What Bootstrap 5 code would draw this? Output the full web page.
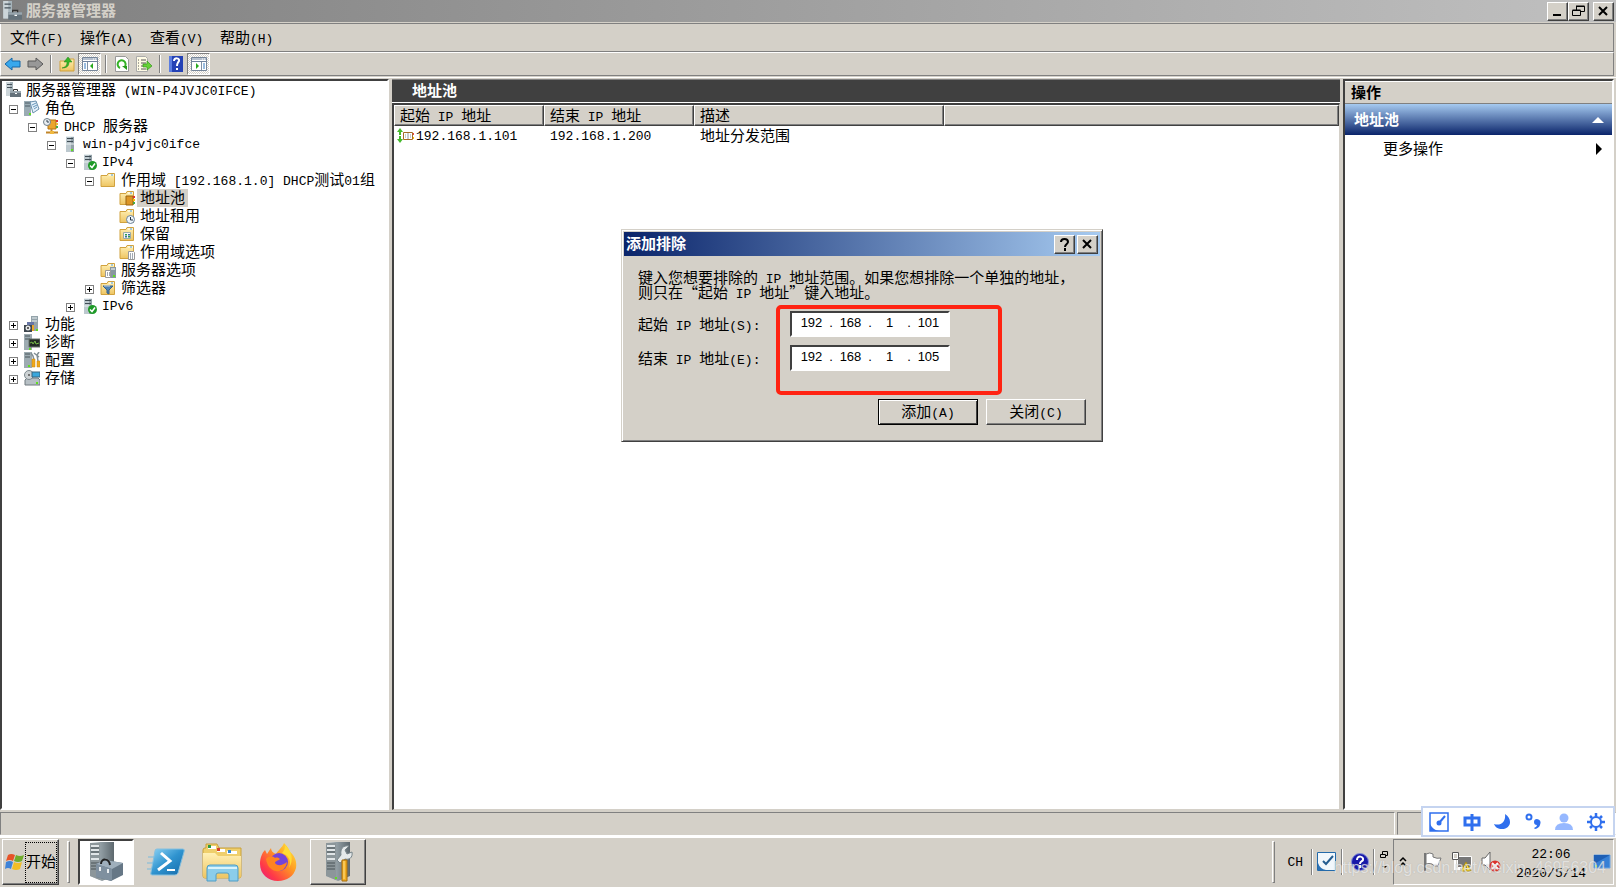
<!DOCTYPE html>
<html lang="zh-CN">
<head>
<meta charset="utf-8">
<meta name="viewport" content="width=device-width, initial-scale=1">
<title>服务器管理器</title>
<link href="https://cdn.jsdelivr.net/npm/bootstrap@5.3.0/dist/css/bootstrap.min.css" rel="stylesheet">
<script src="https://cdn.jsdelivr.net/npm/bootstrap@5.3.0/dist/js/bootstrap.bundle.min.js"></script>
<style>
:root { --face:#d4d0c8; --shade:#808080; --deep:#404040; }
body { font-family:"Liberation Sans","Noto Sans CJK SC",sans-serif; font-size:15px; line-height:18px; color:#000; background:var(--face); }
.lat { font-family:"Liberation Mono","Noto Sans CJK SC",monospace; font-size:13px; line-height:13px; white-space:pre; }
button, input { font:inherit; color:inherit; }
svg { display:block; flex:none; }
.face { background:var(--face); }
.raised { background:var(--face); border:1px solid; border-color:#fff var(--deep) var(--deep) #fff; box-shadow:inset -1px -1px 0 var(--shade); border-radius:0; padding:0; }
.sunken { border:2px solid; border-color:var(--deep) #fff #fff var(--deep); background:#fff; }
.caption-bar { height:22px; padding-left:2px; padding-right:2px; background:linear-gradient(90deg,#808080,#c0c0c0); color:var(--face); font-weight:700; }
.caption-bar .raised { width:21px; height:19px; color:#000; }
.strip { border:1px solid; border-color:#fff var(--shade) var(--shade) #fff; margin-right:2px; }
.menu-strip { height:28px; padding-left:1px; border-top:0; box-shadow:0 -1px 0 var(--shade); margin-top:2px; }
.menu-strip a { color:#000; text-decoration:none; padding:0 8px; width:70px; white-space:nowrap; }
.tool-strip { height:24px; padding-left:1px; }
.tool { width:22px; height:22px; border:0; background:none; padding:0; }
.tool.pressed { width:23px; border:1px solid; border-color:var(--shade) #fff #fff var(--shade); background:repeating-conic-gradient(#fff 0 25%,var(--face) 0 50%) 0 0/2px 2px; }
.divide { width:2px; height:18px; border-left:1px solid var(--shade); border-right:1px solid #fff; }
.panes { padding:1px 2px 0 0; gap:3px; margin-top:1px; border-top:1px solid #fff; }
.tree-pane { width:389px; }
.tree-pane ul { list-style:none; margin:0; padding:0 0 0 19px; }
.tree-pane > ul { padding:0 0 0 3px; }
.tree-pane > ul > li > ul { padding-left:4px; }
.node { height:18px; gap:5px; white-space:nowrap; }
.knob { width:9px; height:9px; margin-right:1px; border:1px solid var(--shade); background:#fff; padding:0; margin-top:3px; }
.knob.none { visibility:hidden; }
.picked { background:var(--face); padding:0 3px; margin:0 -3px; }
.list-title { background:var(--deep); color:#fff; font-weight:700; height:23px; padding-left:20px; border-top:1px solid var(--shade); }
.grid-pane { border-top:2px solid var(--deep); border-left:2px solid var(--deep); border-right:1px solid var(--face); border-bottom:1px solid var(--face); background:#fff; margin-top:1px; }
.scopes { width:100%; table-layout:fixed; border-collapse:separate; border-spacing:0; }
.scopes th { height:21px; line-height:16px; font-weight:400; background:var(--face); border:1px solid; border-color:#fff var(--deep) var(--deep) #fff; box-shadow:inset -1px -1px 0 var(--shade); padding:0 5px; white-space:nowrap; }
.scopes td { height:20px; padding:0 6px; white-space:nowrap; }
.scopes td:first-child { padding-left:3px; }
.act-pane { width:271px; }
.act-head { height:22px; font-weight:700; padding-left:6px; margin-top:1px; border-bottom:1px solid var(--shade); }
.act-group { height:31px; border:0; background:linear-gradient(#a6caf0,#0a246a); color:#fff; font-weight:700; padding:0 8px 0 9px; }
.act-more { height:28px; border:0; background:none; padding:0 10px 0 38px; }
.status { height:23px; margin-top:2px; gap:2px; border-bottom:0; }
.status > div { border:1px solid; border-color:var(--shade) #fff var(--face) var(--shade); }
.status-end { width:219px; }
.taskbar { height:52px; border-top:1px solid #fff; box-shadow:inset 0 2px 0 #fff; padding:3px 2px 2px; }
.taskbar .start { width:57px; height:46px; padding-left:2px; }
.start-text { border:1px dotted #000; height:41px; width:32px; white-space:nowrap; }
.grip { width:3px; height:42px; border:1px solid; border-color:#fff var(--shade) var(--shade) #fff; }
.app-btn { width:56px; height:46px; border:0; background:none; padding:0; }
.app-btn.active { background:#fff; border:2px solid; border-color:var(--deep) #fff #fff var(--deep); }
.app-btn.tool-app { border:1px solid; border-color:#fff var(--deep) var(--deep) #fff; }
.line { width:2px; height:26px; border-left:1px solid var(--shade); border-right:1px solid #fff; }
.tray { border:1px solid; border-color:var(--shade) #fff #fff var(--shade); width:221px; height:46px; padding:0 2px 0 5px; }
.clock { line-height:19px; width:76px; padding-top:3px; }
.dialog-box { left:621px; top:229px; width:482px; border:1px solid; border-color:var(--face) var(--deep) var(--deep) var(--face); box-shadow:inset 1px 1px 0 #fff,inset -1px -1px 0 var(--shade); padding:2px; z-index:5; }
.dialog-title { height:24px; background:linear-gradient(90deg,#0a246a,#a6caf0); color:#fff; font-weight:700; padding:0 2px; gap:2px; }
.dialog-title .raised { width:21px; height:19px; color:#000; }
.dialog-body { padding:13px 14px 14px; }
.dialog-body p { font-family:"Noto Sans CJK SC",sans-serif; line-height:15px; margin:0; white-space:nowrap; }
.dialog-body p .lat { line-height:0; }
.ip-rows { margin-top:12px; gap:8px; }
.ip-rows label { width:152px; padding-top:2px; }
.ip-rows .sunken { width:160px; height:26px; padding:0 2px 3px 4px; font-size:13px; }
.ip-rows input { width:31px; border:0; padding:0; background:none; text-align:center; height:18px; outline:0; }
.ip-rows i { width:8px; font-style:normal; text-align:center; }
.red-frame { left:154px; top:75px; width:226px; height:90px; border:4px solid #ff2312; border-radius:5px; pointer-events:none; }
.dialog-actions { gap:8px; margin-top:28px; }
.dialog-actions .raised { width:100px; height:26px; }
.dialog-actions .main-act { border-color:#000; box-shadow:inset 1px 1px 0 #fff,inset -1px -1px 0 var(--deep); }
.ime { right:1px; bottom:50px; width:194px; height:31px; border:2px solid #c5d4f0; background:#fff; z-index:6; padding:0 8px 0 6px; }
.ime button { border:0; background:none; padding:0; }
.stamp { right:10px; bottom:8px; font-size:16px; line-height:22px; color:#ffffffa0; text-shadow:0 0 1px #8888; z-index:7; pointer-events:none; }
</style>
</head>
<body class="vh-100 overflow-hidden d-flex flex-column position-relative">
<svg width="0" height="0" class="position-absolute" aria-hidden="true">
  <defs>
    <linearGradient id="steel" x2="1"><stop stop-color="#b8c3c8"/><stop offset=".5" stop-color="#8c989e"/><stop offset="1" stop-color="#5d686e"/></linearGradient>
    <linearGradient id="gold" x2="0" y2="1"><stop stop-color="#fff0b5"/><stop offset="1" stop-color="#eec562"/></linearGradient>
    <linearGradient id="sky" x2="1" y2="1"><stop stop-color="#8fd4f5"/><stop offset=".5" stop-color="#2f93cf"/><stop offset="1" stop-color="#1569a8"/></linearGradient>
    <linearGradient id="fire" x1="1" x2="0" y2="1"><stop stop-color="#fff044"/><stop offset=".4" stop-color="#ff9a22"/><stop offset=".75" stop-color="#ff3a47"/><stop offset="1" stop-color="#e3158b"/></linearGradient>
    <symbol id="tower" viewBox="0 0 16 16"><path d="M4 0h8v16H4z" fill="#93a1a8"/><path d="M4 0h5v16H4z" fill="#bcc8ce"/><path d="M5 2.500h6M5 5.500h6" stroke="#3f4c54"/><path d="M4 8h8M4 .5h8" stroke="#e8eef0"/><path d="M9 13h2v2H9z" fill="#5fe020"/></symbol>
    <symbol id="manager" viewBox="0 0 16 16"><path d="M1 0h7v14H1z" fill="#a5b3ba"/><path d="M1 0h4v14H1z" fill="#ccd5d9"/><path d="M2 2.500h5M2 5.500h5" stroke="#46525a"/><path d="M5 9h11v6H5z" fill="#65727b"/><path d="M5 9h11v2H5z" fill="#99a6ae"/><path d="M8.500 9V7.500h4V9" fill="none" stroke="#333"/><path d="M10 11h2v1h-2z" fill="#fff"/></symbol>
    <symbol id="roles" viewBox="0 0 16 16"><path d="M0 1h7v15H0z" fill="#9aabb3"/><path d="M1 3h5M1 6h5" stroke="#4b5b64"/><path d="M6 2l6-1 3 8-6 4z" fill="#e5f1fa" stroke="#6a90ad"/><path d="M8 5l4-2M9 7l4-2M10 9l3-2" stroke="#6696bb"/><path d="M5 13h2v2H5z" fill="#5fe020"/></symbol>
    <symbol id="dhcp" viewBox="0 0 16 16"><path d="M5 2h8v9H5z" fill="#eba52c" stroke="#b37412"/><path d="M13 2h2v2h-2z" fill="#d33"/><path d="M13 5h2v2h-2z" fill="#eb3"/><path d="M13 8h2v2h-2z" fill="#4a4"/><circle cx="4" cy="4" r="3.500" fill="#e9edf0" stroke="#71808b"/><path d="M4 2v2h2" fill="none" stroke="#345"/><path d="M8.500 11v3M3 14.500h12" stroke="#c1852a" stroke-width="2"/><path d="M7 13h4v3H7z" fill="#f0b83e"/></symbol>
    <symbol id="ok-tower" viewBox="0 0 16 16"><use href="#tower" x="-1"/><circle cx="11.500" cy="11.500" r="4.500" fill="#1e9a28"/><path d="M9 11.500l2 2 3-4" stroke="#fff" stroke-width="1.500" fill="none"/></symbol>
    <symbol id="folder" viewBox="0 0 16 16"><path d="M1 3.500h6l1-2h6.500v13H1z" fill="url(#gold)" stroke="#d1a23f"/><path d="M9 3h5" stroke="#fff"/><path d="M11 3h2" stroke="#4aa0dc"/></symbol>
    <symbol id="pool" viewBox="0 0 16 16"><use href="#folder"/><path d="M7 6h7v9H7z" fill="#dc9627" stroke="#9b6510"/><path d="M14 6h2v2h-2z" fill="#d33"/><path d="M14 9h2v2h-2z" fill="#fb0"/><path d="M14 12h2v2h-2z" fill="#4a4"/></symbol>
    <symbol id="lease" viewBox="0 0 16 16"><use href="#folder"/><circle cx="11.500" cy="11.500" r="4" fill="#eef5fa" stroke="#6b8299"/><path d="M11.500 9v3H14" fill="none" stroke="#234"/></symbol>
    <symbol id="keep" viewBox="0 0 16 16"><use href="#folder"/><path d="M4.500 6.500h7v6h-7z" fill="#f4f8f8" stroke="#9aa"/><path d="M6 8h2v1.500H6zM9 10h2v1.500H9z" fill="#2b9a4b"/><path d="M9 8h2v1.500H9zM6 10h2v1.500H6z" fill="#3a6d9f"/></symbol>
    <symbol id="opts" viewBox="0 0 16 16"><use href="#folder"/><path d="M9.500 7.500h5l1 1v7h-6z" fill="#fff" stroke="#999"/><path d="M11 10h1M13 10h1M11 12h1M13 12h1M11 14h1M13 14h1" stroke="#456"/></symbol>
    <symbol id="srv-opts" viewBox="0 0 16 16"><use href="#folder"/><path d="M10 5h6v11h-6z" fill="#8898a0"/><path d="M11 7h4" stroke="#fff"/><path d="M5.500 8.500h5v7h-5z" fill="#fff" stroke="#999"/><path d="M7 11h1M9 11h1M7 13h1M9 13h1" stroke="#456"/><path d="M13 13h2v2h-2z" fill="#5fe020"/></symbol>
    <symbol id="filter" viewBox="0 0 16 16"><use href="#folder"/><path d="M3 6h10L9 10v4l-2-1v-3z" fill="#4f83b3" stroke="#345f89"/><path d="M4 6h6" stroke="#cde"/></symbol>
    <symbol id="feature" viewBox="0 0 16 16"><path d="M7 0h7v15H7z" fill="#94a3aa"/><path d="M8 2h5M8 5h5" stroke="#e9f0f3"/><path d="M0 9h8v7H0z" fill="#3e464e"/><path d="M3 6h7v6H8V9H3z" fill="#6675a5"/><circle cx="4" cy="12" r="2.500" fill="#e6e8e8"/><circle cx="4" cy="12" r="1" fill="#333"/><path d="M8 9h2v6H8z" fill="#e9a52a"/><path d="M12 13h2v2h-2z" fill="#5fe020"/></symbol>
    <symbol id="diag" viewBox="0 0 16 16"><path d="M0 0h8v16H0z" fill="#9dabb1"/><path d="M1 2h5M1 5h5" stroke="#48545a"/><path d="M5 5h11v8H5z" fill="#222c24" stroke="#67736b"/><path d="M6 9l2-1 1 2 2-3 1 3 3-1" stroke="#75b947" fill="none"/><path d="M5 14h2v2H5z" fill="#5fe020"/></symbol>
    <symbol id="config" viewBox="0 0 16 16"><path d="M0 0h8v16H0z" fill="#9dabb1"/><path d="M1 2h5M1 5h5" stroke="#48545a"/><path d="M7 1l2 3 1 4M15 0l-2 3 1 6M10 1l5 4" fill="none" stroke="#828f95" stroke-width="1.500"/><path d="M8 7h3v8H8zM13 9h3v6h-3z" fill="#f0a91c" stroke="#c98410" stroke-width=".5"/><path d="M4 13h2v2H4z" fill="#5fe020"/></symbol>
    <symbol id="storage" viewBox="0 0 16 16"><path d="M1 10l2-2h11l2 2v5H1z" fill="#b7c0c5" stroke="#6f797e"/><circle cx="5" cy="5" r="4.500" fill="#cdd2d4" stroke="#7d888d"/><circle cx="5" cy="5" r="1" fill="#555"/><path d="M8 2h8v5H8z" fill="#3aa7dc" stroke="#39657e"/><path d="M12 12h2v2h-2z" fill="#5fe020"/></symbol>
    <symbol id="panel" viewBox="0 0 16 16"><path d="M.5 1.500h15v13H.5z" fill="#fff" stroke="#76869a"/><path d="M1 3h14M1 5.500h14" stroke="#6f829d"/><path d="M11 3h1M13 3h1" stroke="#fff"/></symbol>
    <symbol id="bigserver" viewBox="0 0 40 42"><path d="M4 2l10-1h14v34l-12 5L4 35z" fill="url(#steel)"/><path d="M4 2h10v37L4 35z" fill="#8c969a"/><path d="M5 5h8M5 9h8M5 13h8M5 18h8" stroke="#e0e5e7" stroke-width="2"/><path d="M5 7h8M5 11h8M5 22h8M5 25h8M5 28h8" stroke="#4a5459"/></symbol>
  </defs>
</svg>

<header class="caption-bar d-flex align-items-center flex-shrink-0">
  <svg width="20" height="20"><use href="#manager"/></svg>
  <span class="ms-1 me-auto">服务器管理器</span>
  <button class="raised d-flex align-items-center justify-content-center" aria-label="最小化"><svg width="11" height="11"><path d="M1 9h8" stroke="#000" stroke-width="2"/></svg></button>
  <button class="raised d-flex align-items-center justify-content-center" aria-label="还原"><svg width="13" height="12" fill="none" stroke="#000"><path d="M4.500 5V1.500h8v5H9M4 1.500h8.500M.5 5.500h8v5h-8zM.5 5h8M4 1h8.500"/></svg></button>
  <button class="raised d-flex align-items-center justify-content-center ms-1" aria-label="关闭"><svg width="11" height="11"><path d="M1 1l8 8M9 1L1 9" stroke="#000" stroke-width="2"/></svg></button>
</header>
<nav class="strip menu-strip d-flex align-items-center flex-shrink-0">
  <a href="#">文件<span class="lat">(F)</span></a><a href="#">操作<span class="lat">(A)</span></a><a href="#">查看<span class="lat">(V)</span></a><a href="#">帮助<span class="lat">(H)</span></a>
</nav>
<div class="strip tool-strip d-flex align-items-center flex-shrink-0">
  <button class="tool" aria-label="后退"><svg width="18" height="16" class="m-auto"><path d="M1 8l7-6v3h8v6H8v3z" fill="#38a8ed" stroke="#1767a6"/></svg></button>
  <button class="tool" aria-label="前进"><svg width="18" height="16" class="m-auto"><path d="M17 8l-7-6v3H2v6h8v3z" fill="#989898" stroke="#595959"/></svg></button>
  <span class="divide mx-1"></span>
  <button class="tool" aria-label="向上"><svg width="16" height="16" class="m-auto"><path d="M1 5h6l2-2h6v12H1z" fill="url(#gold)" stroke="#d1a23f"/><path d="M3 12c4-1 5-3 5-6H5l4-5 4 5h-3c0 4-2 6-7 6" fill="#36b526" stroke="#21841a" stroke-width=".5"/></svg></button>
  <button class="tool pressed" aria-label="控制台树"><svg width="16" height="16" class="m-auto"><use href="#panel"/><path d="M5.500 6v8" stroke="#8291a5"/><path d="M2 8h2M2 10h2M2 12h2" stroke="#357bc0"/><path d="M11 7v6L8 10z" fill="#28a91e"/></svg></button>
  <span class="divide mx-1"></span>
  <button class="tool" aria-label="刷新"><svg width="16" height="16" class="m-auto"><path d="M1.500.5h10l3 3v12h-13z" fill="#fff" stroke="#999"/><path d="M11 10.500A4 4 0 1 0 6 12" fill="none" stroke="#35b326" stroke-width="2"/><path d="M8 10h5v4z" fill="#259a1b"/></svg></button>
  <button class="tool" aria-label="导出列表"><svg width="16" height="16" class="m-auto"><path d="M.5.5h9l2 2v13H.5z" fill="#fffbe5" stroke="#aaa"/><path d="M2 4h1M5 4h5M2 7h1M5 7h5M2 10h1M5 10h3M2 13h1M5 13h5" stroke="#555"/><path d="M7 8h4V5l5 5-5 4v-3H7z" fill="#66d236" stroke="#35951d" stroke-width=".7"/></svg></button>
  <span class="divide mx-1"></span>
  <button class="tool" aria-label="帮助"><svg width="16" height="16" class="m-auto"><path d="M1 0h14v16H1z" fill="#2542b5"/><path d="M1 0h3v16H1z" fill="#5b7de0"/><path d="M6 5c0-4 6-3 5 0-1 2-2 2-2 5M9 12v2" fill="none" stroke="#fff" stroke-width="2"/></svg></button>
  <button class="tool pressed" aria-label="操作窗格"><svg width="16" height="16" class="m-auto"><use href="#panel"/><path d="M10.500 6v8" stroke="#8291a5"/><path d="M12 8h2M12 10h2M12 12h2" stroke="#357bc0"/><path d="M5 7v6l3-3z" fill="#28a91e"/></svg></button>
</div>

<main class="panes d-flex flex-grow-1">
  <section class="tree-pane sunken flex-shrink-0">
    <ul><li>
      <div class="node d-flex align-items-center"><svg width="16" height="16"><use href="#manager"/></svg><span>服务器管理器<span class="lat"> (WIN-P4JVJC0IFCE)</span></span></div>
      <ul>
        <li><div class="node d-flex align-items-center"><button class="knob" aria-label="折叠"><svg width="7" height="7"><path d="M1 3.500h5" stroke="#000"/></svg></button><svg width="16" height="16"><use href="#roles"/></svg><span>角色</span></div>
        <ul><li><div class="node d-flex align-items-center"><button class="knob" aria-label="折叠"><svg width="7" height="7"><path d="M1 3.500h5" stroke="#000"/></svg></button><svg width="16" height="16"><use href="#dhcp"/></svg><span><span class="lat">DHCP </span>服务器</span></div>
          <ul><li><div class="node d-flex align-items-center"><button class="knob" aria-label="折叠"><svg width="7" height="7"><path d="M1 3.500h5" stroke="#000"/></svg></button><svg width="16" height="16"><use href="#tower"/></svg><span class="lat">win-p4jvjc0ifce</span></div>
            <ul><li><div class="node d-flex align-items-center"><button class="knob" aria-label="折叠"><svg width="7" height="7"><path d="M1 3.500h5" stroke="#000"/></svg></button><svg width="16" height="16"><use href="#ok-tower"/></svg><span class="lat">IPv4</span></div>
              <ul>
                <li><div class="node d-flex align-items-center"><button class="knob" aria-label="折叠"><svg width="7" height="7"><path d="M1 3.500h5" stroke="#000"/></svg></button><svg width="16" height="16"><use href="#folder"/></svg><span>作用域<span class="lat"> [192.168.1.0] DHCP</span>测试<span class="lat">01</span>组</span></div>
                  <ul>
                    <li><div class="node d-flex align-items-center"><span class="knob none"></span><svg width="16" height="16"><use href="#pool"/></svg><span class="picked">地址池</span></div></li>
                    <li><div class="node d-flex align-items-center"><span class="knob none"></span><svg width="16" height="16"><use href="#lease"/></svg><span>地址租用</span></div></li>
                    <li><div class="node d-flex align-items-center"><span class="knob none"></span><svg width="16" height="16"><use href="#keep"/></svg><span>保留</span></div></li>
                    <li><div class="node d-flex align-items-center"><span class="knob none"></span><svg width="16" height="16"><use href="#opts"/></svg><span>作用域选项</span></div></li>
                  </ul></li>
                <li><div class="node d-flex align-items-center"><span class="knob none"></span><svg width="16" height="16"><use href="#srv-opts"/></svg><span>服务器选项</span></div></li>
                <li><div class="node d-flex align-items-center"><button class="knob" aria-label="展开"><svg width="7" height="7"><path d="M1 3.500h5M3.500 1v5" stroke="#000"/></svg></button><svg width="16" height="16"><use href="#filter"/></svg><span>筛选器</span></div></li>
              </ul></li>
              <li><div class="node d-flex align-items-center"><button class="knob" aria-label="展开"><svg width="7" height="7"><path d="M1 3.500h5M3.500 1v5" stroke="#000"/></svg></button><svg width="16" height="16"><use href="#ok-tower"/></svg><span class="lat">IPv6</span></div></li>
            </ul></li></ul></li></ul></li>
        <li><div class="node d-flex align-items-center"><button class="knob" aria-label="展开"><svg width="7" height="7"><path d="M1 3.500h5M3.500 1v5" stroke="#000"/></svg></button><svg width="16" height="16"><use href="#feature"/></svg><span>功能</span></div></li>
        <li><div class="node d-flex align-items-center"><button class="knob" aria-label="展开"><svg width="7" height="7"><path d="M1 3.500h5M3.500 1v5" stroke="#000"/></svg></button><svg width="16" height="16"><use href="#diag"/></svg><span>诊断</span></div></li>
        <li><div class="node d-flex align-items-center"><button class="knob" aria-label="展开"><svg width="7" height="7"><path d="M1 3.500h5M3.500 1v5" stroke="#000"/></svg></button><svg width="16" height="16"><use href="#config"/></svg><span>配置</span></div></li>
        <li><div class="node d-flex align-items-center"><button class="knob" aria-label="展开"><svg width="7" height="7"><path d="M1 3.500h5M3.500 1v5" stroke="#000"/></svg></button><svg width="16" height="16"><use href="#storage"/></svg><span>存储</span></div></li>
      </ul>
    </li></ul>
  </section>

  <section class="d-flex flex-column flex-grow-1 bg-white">
    <div class="list-title d-flex align-items-center">地址池</div>
    <div class="grid-pane flex-grow-1">
      <table class="scopes">
        <colgroup><col style="width:150px"><col style="width:150px"><col style="width:250px"><col></colgroup>
        <thead><tr><th>起始<span class="lat"> IP </span>地址</th><th>结束<span class="lat"> IP </span>地址</th><th>描述</th><th></th></tr></thead>
        <tbody><tr>
          <td><div class="d-flex align-items-center"><svg width="19" height="16"><path d="M3 0l3 4H4v3H2V4H0zM3 15l3-4H4V8H2v3H0z" fill="#45ba2c"/><path d="M6.500 4.500h9v7h-9z" fill="#fff" stroke="#a36a26"/><path d="M11 5v6M8 7h1M13 7h1M8 9h1M13 9h1" stroke="#8a97a5"/><path d="M16 5h1v2h-1z" fill="#e44"/><path d="M16 9h1v2h-1z" fill="#fb0"/></svg><span class="lat">192.168.1.101</span></div></td>
          <td class="lat">192.168.1.200</td><td>地址分发范围</td><td></td></tr></tbody>
      </table>
    </div>
  </section>

  <aside class="act-pane sunken flex-shrink-0 d-flex flex-column">
    <div class="act-head face d-flex align-items-center">操作</div>
    <button class="act-group d-flex align-items-center justify-content-between">地址池<svg width="12" height="6"><path d="M6 0l6 6H0z" fill="#fff"/></svg></button>
    <button class="act-more d-flex align-items-center justify-content-between">更多操作<svg width="6" height="12"><path d="M0 0l6 6-6 6z"/></svg></button>
  </aside>
</main>

<div class="status d-flex flex-shrink-0"><div class="flex-grow-1"></div><div class="status-end"></div></div>

<footer class="taskbar d-flex align-items-center flex-shrink-0">
  <button class="raised start d-flex align-items-center">
    <svg width="20" height="20" viewBox="0 0 20 20"><path d="M3 3q3-2 7 0L8 9Q5 7 1 9z" fill="#e65328"/><path d="M11 3q4 2 8 0l-2 6q-4 2-8 0z" fill="#70ad2b"/><path d="M1 10q4-2 7 0l-2 7q-3-2-6 0z" fill="#3e83d8"/><path d="M9 10q4 2 8 0l-2 7q-4 2-8 0z" fill="#f3bd25"/></svg>
    <span class="start-text d-flex align-items-center">开始</span>
  </button>
  <span class="grip mx-2"></span>
  <button class="app-btn active d-flex align-items-center justify-content-center" aria-label="服务器管理器"><svg width="40" height="42"><use href="#bigserver"/><path d="M10 23l9-4 18 3v12l-12 6-15-4z" fill="#667786"/><path d="M10 23l9-4 18 3-11 6z" fill="#9fafbc"/><path d="M10 23l16 5v12l-16-4z" fill="#7f909f"/><path d="M15 23c0-6 8-6 9 1" stroke="#222" stroke-width="2" fill="none"/><path d="M13 26h2v4h-2zM21 28h2v4h-2z" fill="#e9edf0"/></svg></button>
  <button class="app-btn d-flex align-items-center justify-content-center ms-1" aria-label="PowerShell"><svg width="38" height="30"><path d="M1 10h8M0 16h7M0 22h6" stroke="#8abfd9" stroke-width="2" opacity=".6"/><path d="M10 2h26q2 0 1 3l-6 21q-1 2-3 2H5q-2 0-1-3L8 4q0-2 2-2z" fill="url(#sky)" stroke="#86c0df"/><path d="M14 6l9 8-12 9" fill="none" stroke="#fff" stroke-width="3"/><path d="M20 23h8" stroke="#fff" stroke-width="2"/></svg></button>
  <button class="app-btn d-flex align-items-center justify-content-center" aria-label="资源管理器"><svg width="40" height="40"><path d="M1 8q0-2 2-2h1V2h11l2 4h22v28q0 2-2 2H3q-2 0-2-2z" fill="#efcf6c" stroke="#c9a13b"/><path d="M6 4h8v3H6zM15 7h8v3h-8zM25 9h10v3H25z" fill="#fff"/><path d="M6 3h3v3H6z" fill="#2c9a43"/><path d="M15 6h3v3h-3z" fill="#d63f2b"/><path d="M26 8h3v3h-3z" fill="#3287d1"/><path d="M1 11h12l3 3h23v20q0 2-2 2H3q-2 0-2-2z" fill="url(#gold)"/><path d="M5 39V26q0-3 3-3h25q3 0 3 3v13h-9v-6q0-2-2-2h-9q-2 0-2 2v6z" fill="#8bcdea" stroke="#4f9dc6"/><path d="M6 26h29" stroke="#d9f3fc" stroke-width="2"/></svg></button>
  <button class="app-btn d-flex align-items-center justify-content-center" aria-label="Firefox"><svg width="38" height="40"><path d="M25 1c3 3 5 6 6 9 5 4 7 10 6 16-2 8-9 13-18 13C9 39 1 32 1 22c0-6 2-11 5-14l2 4 4-6c0 3 2 5 5 6 3-5 6-6 8-11z" fill="url(#fire)"/><circle cx="20" cy="20" r="9" fill="#7544d8"/><path d="M7 17c2-3 7-3 9-1 2-1 4 0 5 1-2 2-5 2-5 4 3 4 8 2 12-1-1 7-6 10-11 9C11 28 8 23 7 17z" fill="#ff8420"/><path d="M26 3c7 6 9 15 4 23 3-8-1-13-7-15 2-2 3-4 3-8z" fill="#ffdb35"/></svg></button>
  <button class="raised app-btn tool-app d-flex align-items-center justify-content-center ms-1" aria-label="管理工具"><svg width="32" height="42"><use href="#bigserver" width="40" height="42"/><path d="M27 5l-4 4 2 4 5-2c1 6-3 8-7 7l-5 4-3-3 4-5c-1-6 2-10 8-9z" fill="#e5e9ea" stroke="#78858a"/><path d="M20 19h5v21h-5z" fill="#f0ad23" stroke="#a86d0b"/><path d="M22 20v18" stroke="#ffe18a"/><path d="M13 36h2v2h-2z" fill="#5fe020"/></svg></button>

  <span class="grip ms-auto me-2"></span>
  <span class="lat mx-1">CH</span>
  <span class="line ms-1"></span>
  <svg width="20" height="20" class="mx-1"><path d="M.5.5h18v18H.5z" fill="#f1f7fc" stroke="#246aaa"/><path d="M1 11q2 6 8 7H1z" fill="#2c72b6"/><path d="M6 9l3 3 7-8" fill="none" stroke="#245c90" stroke-width="2"/></svg>
  <span class="line me-2"></span>
  <svg width="18" height="18"><circle cx="9" cy="9" r="8.500" fill="#1818a8" stroke="#8590d8"/><path d="M6 7c0-5 7-4 6 0-1 2-3 1-3 4M9 12v3" fill="none" stroke="#fff" stroke-width="2"/></svg>
  <span class="line ms-1"></span>
  <svg width="10" height="26" class="mx-1"><path d="M3.500 5V2.500h5v4H6M1.500 5.500h5v3h-5z" fill="none" stroke="#000"/><path d="M3 17h5l-2 2z"/></svg>
  <div class="tray d-flex align-items-center">
    <svg width="8" height="12"><path d="M1 5l3-3 3 3M1 10l3-3 3 3" fill="none" stroke="#000" stroke-width="1.500"/></svg>
    <svg width="20" height="20" class="ms-3"><path d="M2 1v18" stroke="#777" stroke-width="2"/><path d="M3 2q4-2 7 0v3q4 2 8 1l-3 8q-4 1-6-2-3-1-6 0z" fill="#fff" stroke="#777"/></svg>
    <svg width="22" height="22" class="ms-2"><path d="M6.500 5.500h14v11h-14z" fill="#777" stroke="#fff"/><path d="M2 2h5v6H2zM4 8v10h5" fill="none" stroke="#fff" stroke-width="2"/><path d="M1.500 1.500h6v7h-6z" fill="none" stroke="#555"/><path d="M15 11l5 9H10z" fill="#ffe33b" stroke="#ac8b12"/><path d="M15 14v3M15 18v1" stroke="#000"/></svg>
    <svg width="20" height="22" class="ms-2"><path d="M1 7h3l5-6v18l-5-5H1z" fill="#fff" stroke="#666"/><circle cx="14" cy="15" r="5.500" fill="#da322b"/><path d="M11 12l6 6M17 12l-6 6" stroke="#fff" stroke-width="2"/></svg>
    <div class="clock lat text-center ms-auto"><div>22:06</div><div>2020/5/14</div></div>
    <svg width="18" height="16" class="ms-1"><path d="M1 1h16v13H1z" fill="#3680d6" stroke="#6fa4e0"/><path d="M1 1h16L1 10z" fill="#1e5fb5"/><path d="M2 11h2v2H2z" fill="#6e4"/></svg>
  </div>
</footer>

<section class="dialog-box face position-absolute" role="dialog" aria-label="添加排除">
  <div class="dialog-title d-flex align-items-center"><span class="me-auto">添加排除</span>
    <button class="raised d-flex align-items-center justify-content-center" aria-label="帮助"><svg width="11" height="13"><path d="M2 4c0-4 7-4 7 0 0 2-3 2-3 5M6 10v3" fill="none" stroke="#000" stroke-width="2"/></svg></button>
    <button class="raised d-flex align-items-center justify-content-center" aria-label="关闭"><svg width="11" height="11"><path d="M1 1l8 8M9 1L1 9" stroke="#000" stroke-width="2"/></svg></button>
  </div>
  <form class="dialog-body" onsubmit="return false">
    <p>键入您想要排除的<span class="lat"> IP </span>地址范围。如果您想排除一个单独的地址，<br>则只在“起始<span class="lat"> IP </span>地址”键入地址。</p>
    <div class="ip-rows d-flex flex-column">
      <div class="d-flex align-items-center"><label for="s1">起始<span class="lat"> IP </span>地址<span class="lat">(S):</span></label><div class="sunken d-flex align-items-center"><input id="s1" value="192"><i>.</i><input value="168" aria-label="起始 2"><i>.</i><input value="1" aria-label="起始 3"><i>.</i><input value="101" aria-label="起始 4"></div></div>
      <div class="d-flex align-items-center"><label for="e1">结束<span class="lat"> IP </span>地址<span class="lat">(E):</span></label><div class="sunken d-flex align-items-center"><input id="e1" value="192"><i>.</i><input value="168" aria-label="结束 2"><i>.</i><input value="1" aria-label="结束 3"><i>.</i><input value="105" aria-label="结束 4"></div></div>
    </div>
    <div class="dialog-actions d-flex justify-content-end"><button class="raised main-act">添加<span class="lat">(A)</span></button><button class="raised" type="button">关闭<span class="lat">(C)</span></button></div>
  </form>
  <div class="red-frame position-absolute"></div>
</section>

<div class="ime position-absolute d-flex align-items-center justify-content-between">
  <button aria-label="输入法"><svg width="20" height="20"><path d="M1 1h18v18H1z" fill="#fff" stroke="#2f6fee" stroke-width="1.500"/><path d="M1 12q3 6 9 7H1z" fill="#2f6fee"/><circle cx="10" cy="11" r="2.500" fill="#2f6fee"/><path d="M10 11l6-7" stroke="#2f6fee" stroke-width="2"/></svg></button>
  <button aria-label="中文"><svg width="18" height="18" fill="none" stroke="#2f6fee" stroke-width="3"><path d="M2 5h14v7H2zM9 1v17"/></svg></button>
  <button aria-label="夜间"><svg width="17" height="17"><path d="M11 1c8 5 6 15-3 15-4 0-7-2-8-5 7 2 12-2 11-10z" fill="#2f6fee"/></svg></button>
  <button aria-label="标点"><svg width="17" height="17"><circle cx="4" cy="4" r="2.500" fill="none" stroke="#2f6fee" stroke-width="2"/><path d="M9 9q0-3 3-3 5 1 3 6-1 3-5 4l-1-1q3-1 3-3-3 0-3-3z" fill="#2f6fee"/></svg></button>
  <button aria-label="用户"><svg width="18" height="17"><circle cx="9" cy="5" r="4.500" fill="#96b8ff"/><path d="M0 17q0-7 9-7t9 7z" fill="#96b8ff"/></svg></button>
  <button aria-label="设置"><svg width="18" height="18" fill="none" stroke="#2f6fee"><circle cx="9" cy="9" r="5" stroke-width="2"/><path d="M9 0v4M9 14v4M0 9h4M14 9h4M3 3l2 2M13 13l2 2M15 3l-2 2M5 13l-2 2" stroke-width="2.500"/></svg></button>
</div>
<div class="stamp position-absolute">https://blog.csdn.net/weixin_46956304</div>
</body>
</html>
